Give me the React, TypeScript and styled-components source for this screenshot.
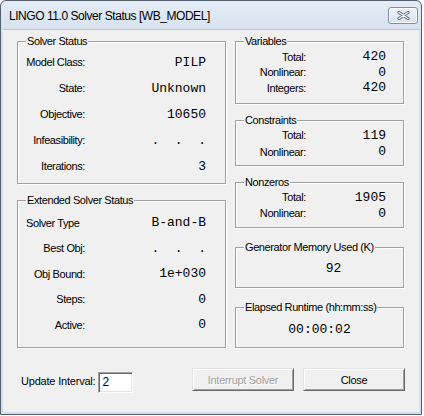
import React from "react";
import styled, { createGlobalStyle } from "styled-components";

const Global = createGlobalStyle`
  html, body { margin: 0; padding: 0; background: #ffffff; }
  body { font-family: "Liberation Sans", Arial, sans-serif; }
  * { box-sizing: border-box; }
`;

const Window = styled.div`
  width: 422px;
  height: 415px;
  border: 1px solid #55606e;
  border-radius: 6px 6px 0 0;
  background: linear-gradient(#e4ecf6, #d3dfec 40px, #d3dfec);
  display: flex;
  flex-direction: column;
  padding: 0 2px 2px 2px;
`;

const TitleBar = styled.div`
  height: 28px;
  display: flex;
  align-items: flex-start;
  padding-left: 6px;
`;

const Title = styled.div`
  font-family: "Liberation Sans", Arial, sans-serif;
  font-size: 12px;
  letter-spacing: -0.45px;
  color: #000;
  line-height: 14px;
  margin-top: 8px;
  flex: 1;
  white-space: nowrap;
`;

const CloseBox = styled.div`
  width: 30px;
  height: 17px;
  margin-top: 6px;
  margin-right: 1px;
  border: 1px solid #7f8ea3;
  border-radius: 3px;
  background: linear-gradient(#f1f4f8, #d9e1eb);
  box-shadow: inset 0 0 0 1px rgba(255, 255, 255, 0.75);
  display: flex;
  align-items: center;
  justify-content: center;
`;

const Client = styled.div`
  flex: 1;
  background: #f0f0f0;
  border-top: 1px solid #b8c5d4;
  padding: 11px 15px 0 14px;
  display: flex;
  flex-direction: column;
`;

const Columns = styled.div`
  display: flex;
  gap: 9px;
`;

const Column = styled.div<{ $w: number; $gap: number }>`
  width: ${(p) => p.$w}px;
  display: flex;
  flex-direction: column;
`;

const Group = styled.div<{ $h: number; $pt: number; $mt?: number }>`
  position: relative;
  height: ${(p) => p.$h}px;
  margin-top: ${(p) => p.$mt ?? 0}px;
  padding-top: ${(p) => p.$pt}px;
  border: 1px solid #a0a0a0;
  box-shadow: inset 1px 1px 0 #ffffff, 1px 1px 0 #ffffff;
`;

const Legend = styled.div`
  position: absolute;
  top: -8px;
  left: 8px;
  padding: 0 1px 0 1px;
  background: #f0f0f0;
  font-size: 11px;
  letter-spacing: -0.4px;
  line-height: 14px;
  color: #000;
  white-space: nowrap;
`;

const Row = styled.div<{ $h: number }>`
  height: ${(p) => p.$h}px;
  display: flex;
  align-items: center;
`;

const Label = styled.div<{ $w: number; $left?: boolean }>`
  width: ${(p) => p.$w}px;
  text-align: ${(p) => (p.$left ? "left" : "right")};
  padding-left: ${(p) => (p.$left ? 8 : 0)}px;
  font-size: 11px;
  letter-spacing: -0.4px;
  color: #000;
  white-space: nowrap;
`;

const Value = styled.div<{ $pr: number }>`
  flex: 1;
  text-align: right;
  padding-right: ${(p) => p.$pr}px;
  font-family: "Liberation Mono", "Courier New", monospace;
  font-size: 13px;
  color: #000;
  white-space: pre;
`;

const Single = styled.div<{ $shift: number }>`
  height: 16px;
  display: flex;
  align-items: center;
  justify-content: center;
  padding-left: ${(p) => p.$shift}px;
  font-family: "Liberation Mono", "Courier New", monospace;
  font-size: 13px;
  color: #000;
`;

const Footer = styled.div`
  margin-top: 20px;
  display: flex;
  align-items: flex-start;
  padding-left: 4px;
  margin-right: -1px;
`;

const IntervalLabel = styled.div`
  margin-top: 6px;
  font-size: 11px;
  letter-spacing: -0.2px;
  color: #000;
  line-height: 14px;
`;

const IntervalInput = styled.div`
  margin-top: 4px;
  margin-left: 3px;
  width: 35px;
  height: 21px;
  background: #ffffff;
  border: 1px solid;
  border-color: #a0a0a0 #ffffff #ffffff #a0a0a0;
  box-shadow: inset 1px 1px 0 #696969, inset -1px -1px 0 #e3e3e3;
  padding: 2px 0 0 3px;
  font-size: 12px;
  line-height: 14px;
  color: #000;
`;

const Buttons = styled.div`
  margin-left: auto;
  display: flex;
  gap: 9px;
`;

const Button = styled.div<{ $disabled?: boolean }>`
  width: 102px;
  height: 23px;
  display: flex;
  align-items: center;
  justify-content: center;
  background: #f0f0f0;
  border: 1px solid;
  border-color: #e3e3e3 #696969 #696969 #e3e3e3;
  box-shadow: inset 1px 1px 0 #ffffff, inset -1px -1px 0 #a0a0a0;
  font-size: 11px;
  letter-spacing: -0.3px;
  color: ${(p) => (p.$disabled ? "#a0a0a0" : "#000")};
  text-shadow: ${(p) => (p.$disabled ? "1px 1px 0 #ffffff" : "none")};
`;

type Pair = [string, string];

const LeftRows: React.FC<{ rows: Pair[]; h: number; leftFirst?: boolean }> = ({ rows, h, leftFirst }) => (
  <>
    {rows.map(([l, v], i) => (
      <Row key={l} $h={h}>
        <Label $w={67} $left={leftFirst && i === 0}>{l}</Label>
        <Value $pr={19}>{v}</Value>
      </Row>
    ))}
  </>
);

const RightRows: React.FC<{ rows: Pair[]; h: number }> = ({ rows, h }) => (
  <>
    {rows.map(([l, v]) => (
      <Row key={l} $h={h}>
        <Label $w={70}>{l}</Label>
        <Value $pr={17}>{v}</Value>
      </Row>
    ))}
  </>
);

export default function App() {
  return (
    <>
      <Global />
      <Window>
        <TitleBar>
          <Title>LINGO 11.0 Solver Status [WB_MODEL]</Title>
          <CloseBox>
            <svg width="13" height="9" viewBox="0 0 13 9">
              <path d="M2 1.5 L11 7.5 M11 1.5 L2 7.5" stroke="#5d6c80" strokeWidth="3.2" strokeLinecap="round" fill="none" />
              <path d="M2 1.5 L11 7.5 M11 1.5 L2 7.5" stroke="#f5f7fa" strokeWidth="1.4" strokeLinecap="round" fill="none" />
            </svg>
          </CloseBox>
        </TitleBar>
        <Client>
          <Columns>
            <Column $w={209} $gap={16}>
              <Group $h={143} $pt={7}>
                <Legend>Solver Status</Legend>
                <LeftRows
                  h={26}
                  rows={[
                    ["Model Class:", "PILP"],
                    ["State:", "Unknown"],
                    ["Objective:", "10650"],
                    ["Infeasibility:", ".  .  ."],
                    ["Iterations:", "3"],
                  ]}
                />
              </Group>
              <Group $h={148} $pt={9} $mt={16}>
                <Legend>Extended Solver Status</Legend>
                <LeftRows
                  h={25.5}
                  leftFirst
                  rows={[
                    ["Solver Type", "B-and-B"],
                    ["Best Obj:", ".  .  ."],
                    ["Obj Bound:", "1e+030"],
                    ["Steps:", "0"],
                    ["Active:", "0"],
                  ]}
                />
              </Group>
            </Column>
            <Column $w={169} $gap={16}>
              <Group $h={63} $pt={7}>
                <Legend>Variables</Legend>
                <RightRows
                  h={15.5}
                  rows={[
                    ["Total:", "420"],
                    ["Nonlinear:", "0"],
                    ["Integers:", "420"],
                  ]}
                />
              </Group>
              <Group $h={46} $pt={6} $mt={16}>
                <Legend>Constraints</Legend>
                <RightRows
                  h={16.5}
                  rows={[
                    ["Total:", "119"],
                    ["Nonlinear:", "0"],
                  ]}
                />
              </Group>
              <Group $h={46} $pt={6} $mt={16}>
                <Legend>Nonzeros</Legend>
                <RightRows
                  h={16}
                  rows={[
                    ["Total:", "1905"],
                    ["Nonlinear:", "0"],
                  ]}
                />
              </Group>
              <Group $h={41} $pt={12} $mt={19}>
                <Legend>Generator Memory Used (K)</Legend>
                <Single $shift={28}>92</Single>
              </Group>
              <Group $h={41} $pt={13} $mt={19}>
                <Legend>Elapsed Runtime (hh:mm:ss)</Legend>
                <Single $shift={0}>00:00:02</Single>
              </Group>
            </Column>
          </Columns>
          <Footer>
            <IntervalLabel>Update Interval:</IntervalLabel>
            <IntervalInput>2</IntervalInput>
            <Buttons>
              <Button $disabled>Interrupt Solver</Button>
              <Button>Close</Button>
            </Buttons>
          </Footer>
        </Client>
      </Window>
    </>
  );
}
